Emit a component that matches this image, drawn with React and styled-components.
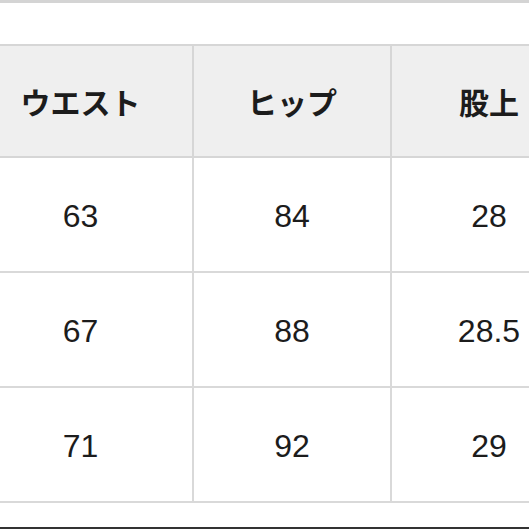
import React from 'react';
import styled, { createGlobalStyle } from 'styled-components';

const rows = [
    ['63', '84', '28'],
    ['67', '88', '28.5'],
    ['71', '92', '29'],
];

export default function App() {
    return (
        <>
            <GlobalStyle />
            <Page>
                <TopRule />
                <SizeTable>
                    <thead>
                        <tr>
                            <HeadCell>ウエスト</HeadCell>
                            <HeadCell>ヒップ</HeadCell>
                            <HeadCell>股上</HeadCell>
                        </tr>
                    </thead>
                    <tbody>
                        {rows.map((r, i) => (
                            <tr key={i}>
                                {r.map((v, j) => (
                                    <Cell key={j}>{v}</Cell>
                                ))}
                            </tr>
                        ))}
                    </tbody>
                </SizeTable>
                <BottomRule />
            </Page>
        </>
    );
}

//Styled Components
const GlobalStyle = createGlobalStyle`
    html, body {
        margin: 0;
        padding: 0;
        overflow: hidden;
        background: #fff;
    }
`

const Page = styled.div`
    width: 529px;
    height: 529px;
    display: flex;
    flex-direction: column;
    overflow: hidden;
    font-family: "Liberation Sans", "Noto Sans CJK JP", sans-serif;
    color: #1c1c1c;
`

const TopRule = styled.div`
    height: 3px;
    background: #d4d4d4;
    margin-bottom: 41px;
    flex: none;
`

const SizeTable = styled.table`
    border-collapse: collapse;
    margin-left: -33px;
    width: 613px;
    table-layout: fixed;
    flex: none;

    th:nth-child(1) { width: 223px; }
    th:nth-child(2) { width: 196px; }
    th:nth-child(3) { width: 194px; }
`

const HeadCell = styled.th`
    height: 110px;
    padding: 0;
    background: #efefef;
    border: 2px solid #d6d6d6;
    font-size: 30px;
    font-weight: bold;
    text-align: center;
    vertical-align: middle;
`

const Cell = styled.td`
    height: 115px;
    padding: 0;
    padding-top: 4px;
    box-sizing: border-box;
    border: 2px solid #d9d9d9;
    font-size: 32px;
    text-align: center;
    vertical-align: middle;
`

const BottomRule = styled.div`
    margin-top: auto;
    height: 2px;
    background: #333;
    flex: none;
`
